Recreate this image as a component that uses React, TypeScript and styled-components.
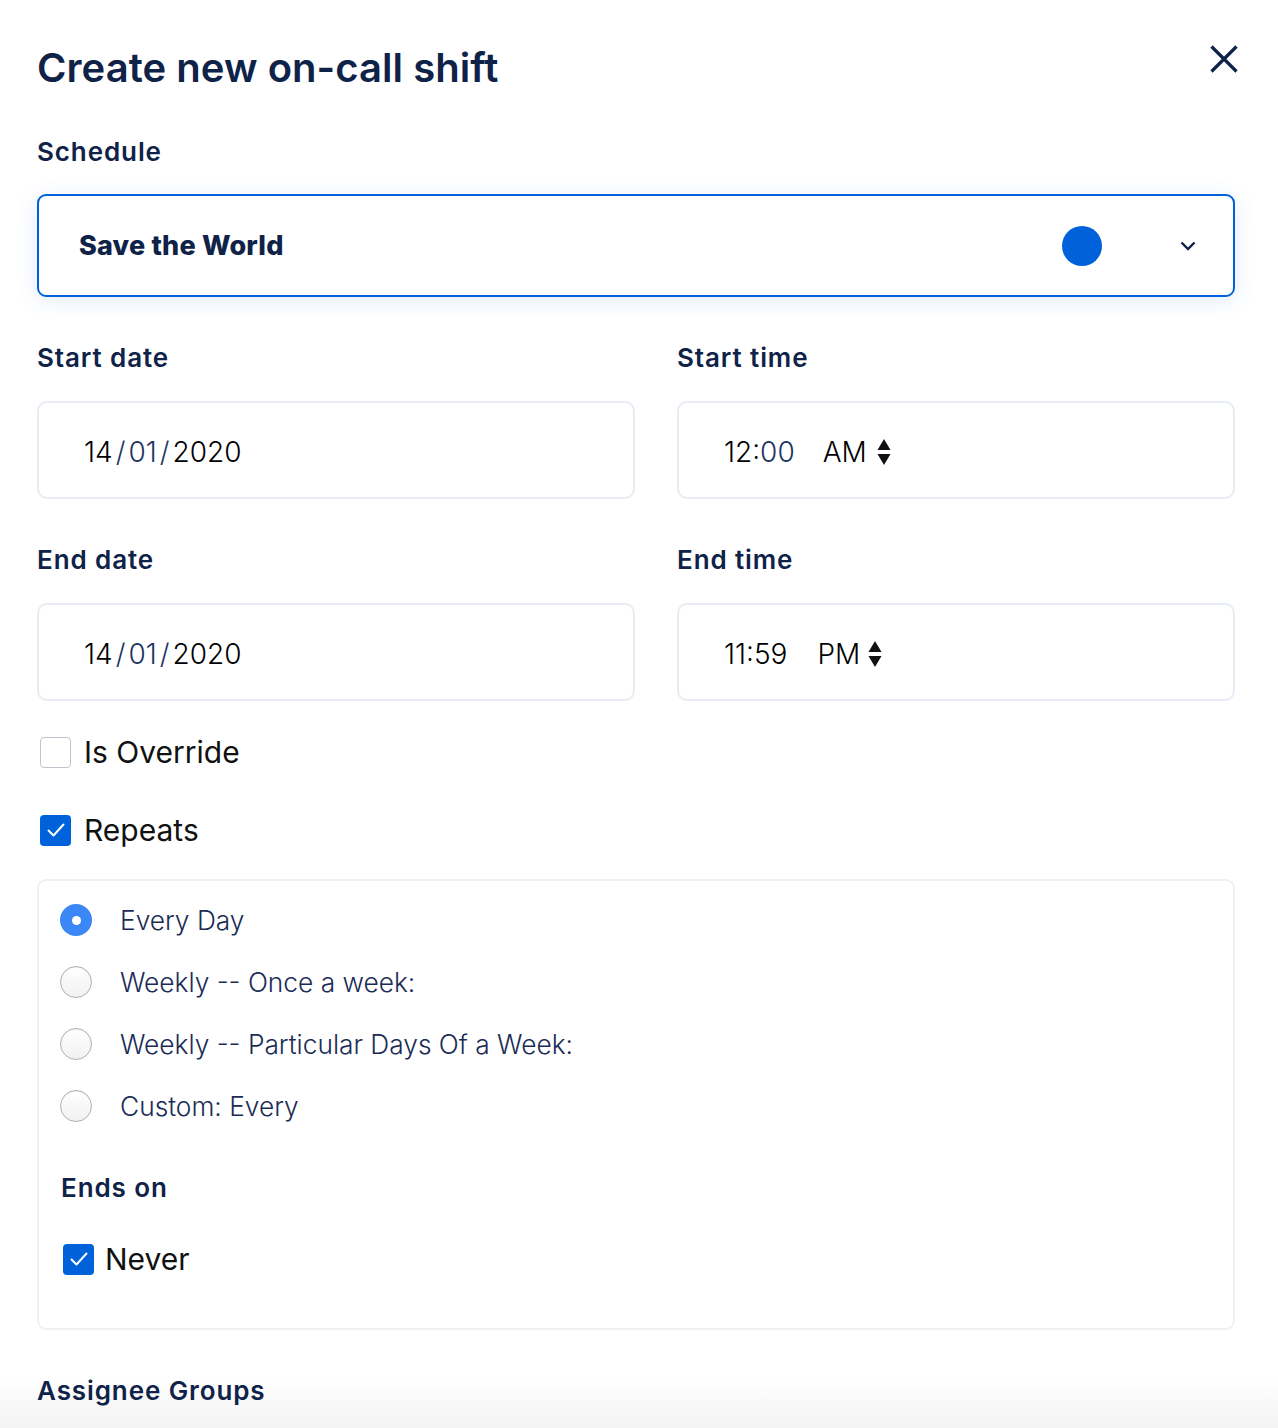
import React from "react";
import styled, { createGlobalStyle } from "styled-components";

const Global = createGlobalStyle`
  html, body { margin: 0; padding: 0; background: #ffffff; }
  body { font-family: Inter, Roboto, "Noto Sans", Arial, sans-serif; }
  * { box-sizing: border-box; }
`;

const navy = "#0f2248";

const Page = styled.div`
  width: 1278px;
  height: 1428px;
  overflow: hidden;
  padding: 44px 43px 0 37px;
  background: linear-gradient(to bottom, #ffffff 0, #ffffff 1376px, #f3f3f3 1428px);
`;

const Header = styled.div`
  display: flex;
  justify-content: space-between;
  align-items: flex-start;
`;

const Title = styled.h1`
  margin: 0;
  font-size: 40px;
  line-height: 48px;
  font-weight: 600;
  color: ${navy};
  letter-spacing: 0.05px;
`;

const CloseButton = styled.button`
  width: 28px;
  height: 28px;
  margin: 1px -3px 0 0;
  padding: 0;
  border: none;
  background: none;
  display: flex;
`;

const Label = styled.div<{ $mt?: number }>`
  margin-top: ${(p) => p.$mt ?? 0}px;
  font-size: 26px;
  line-height: 32px;
  font-weight: 600;
  letter-spacing: 0.9px;
  color: ${navy};
`;

const SelectBox = styled.div`
  margin-top: 26px;
  height: 103px;
  border: 2px solid #0062da;
  border-radius: 9px;
  box-shadow: 0 4px 22px rgba(0, 98, 218, 0.12);
  display: flex;
  align-items: center;
  padding: 0 37px 0 40px;
`;

const SelectText = styled.div`
  flex: 1;
  font-size: 27px;
  font-weight: 800;
  letter-spacing: 0.2px;
  color: ${navy};
`;

const Dot = styled.div`
  width: 40px;
  height: 40px;
  border-radius: 50%;
  background: #0062da;
  margin-right: 78px;
`;

const Grid = styled.div`
  display: grid;
  grid-template-columns: 1fr 1fr;
  margin-top: 45px;
  row-gap: 45px;
`;

const Field = styled.div<{ $right?: boolean }>`
  padding-left: ${(p) => (p.$right ? 41 : 0)}px;
  padding-right: ${(p) => (p.$right ? 0 : 1)}px;
`;

const InputBox = styled.div`
  margin-top: 27px;
  height: 98px;
  border: 2px solid #e6ebf4;
  border-radius: 10px;
  display: flex;
  align-items: center;
  padding: 3px 0 0 45px;
  font-size: 28px;
  font-weight: 300;
  color: #000;
`;

const Seg = styled.span<{ $focus?: boolean; $ml?: number }>`
  color: ${(p) => (p.$focus ? "#1d3563" : "#000")};
  margin-left: ${(p) => p.$ml ?? 0}px;
`;

const Slash = styled.span`
  color: #1d3563;
  margin: 0 3px;
`;

const SpinnerIcon = styled.svg<{ $ml: number }>`
  margin-left: ${(p) => p.$ml}px;
  flex: none;
`;

const CheckRow = styled.label<{ $mt: number; $gap?: number }>`
  display: flex;
  align-items: center;
  margin-top: ${(p) => p.$mt}px;
  padding-left: 3px;
  gap: ${(p) => p.$gap ?? 13}px;
  height: 32px;
  font-size: 30px;
  font-weight: 400;
  color: #111;
`;

const Box = styled.span<{ $checked?: boolean }>`
  width: 31px;
  height: 31px;
  border-radius: 4px;
  flex: none;
  display: flex;
  align-items: center;
  justify-content: center;
  background: ${(p) => (p.$checked ? "#0062da" : "#fff")};
  border: ${(p) => (p.$checked ? "none" : "1.5px solid #bfc5cf")};
`;

const RepeatPanel = styled.div`
  margin-top: 33px;
  border: 2px solid #f0f1f3;
  border-radius: 9px;
  padding: 8px 20px 53px 21px;
`;

const RadioRow = styled.div`
  display: flex;
  align-items: center;
  height: 62px;
  gap: 28px;
  font-size: 26.3px;
  font-weight: 300;
  color: #1a2c55;
`;

const Radio = styled.span<{ $on?: boolean }>`
  width: 32px;
  height: 32px;
  border-radius: 50%;
  flex: none;
  display: flex;
  align-items: center;
  justify-content: center;
  background: ${(p) => (p.$on ? "#3a87f5" : "linear-gradient(#ffffff, #f1f1f1)")};
  border: ${(p) => (p.$on ? "none" : "1.5px solid #b0b0b0")};
  box-shadow: ${(p) => (p.$on ? "none" : "inset 0 1px 1px rgba(0,0,0,0.06)")};
  &::after {
    content: "";
    display: ${(p) => (p.$on ? "block" : "none")};
    width: 9px;
    height: 9px;
    border-radius: 50%;
    background: #fff;
  }
`;

const SubLabel = styled(Label)`
  margin-top: 35px;
  padding-left: 1px;
`;

const Check = () => (
  <svg width="20" height="16" viewBox="0 0 20 16" fill="none">
    <path d="M2.5 8.5 L7.5 13.5 L17.5 2.5" stroke="#fff" strokeWidth="2" strokeLinecap="round" strokeLinejoin="round" />
  </svg>
);

const Spinner = ({ ml }: { ml: number }) => (
  <SpinnerIcon $ml={ml} width="14" height="26" viewBox="0 0 14 26">
    <path d="M7 0 L13.5 11 L0.5 11 Z" fill="#111" />
    <path d="M7 26 L13.5 15 L0.5 15 Z" fill="#111" />
  </SpinnerIcon>
);

const DateValue = () => (
  <>
    <Seg>14</Seg>
    <Slash>/</Slash>
    <Seg $focus>01</Seg>
    <Slash>/</Slash>
    <Seg>2020</Seg>
  </>
);

export default function App() {
  return (
    <>
      <Global />
      <Page>
        <Header>
          <Title>Create new on-call shift</Title>
          <CloseButton aria-label="Close">
            <svg width="28" height="28" viewBox="0 0 28 28">
              <path d="M1.5 1.5 L26.5 26.5 M26.5 1.5 L1.5 26.5" stroke={navy} strokeWidth="3.2" />
            </svg>
          </CloseButton>
        </Header>

        <Label $mt={44}>Schedule</Label>
        <SelectBox>
          <SelectText>Save the World</SelectText>
          <Dot />
          <svg width="16" height="10" viewBox="0 0 16 10">
            <path d="M1.5 1.5 L8 8 L14.5 1.5" stroke={navy} strokeWidth="2.4" fill="none" />
          </svg>
        </SelectBox>

        <Grid>
          <Field>
            <Label>Start date</Label>
            <InputBox>
              <DateValue />
            </InputBox>
          </Field>
          <Field $right>
            <Label>Start time</Label>
            <InputBox>
              <Seg>12:</Seg>
              <Seg $focus>00</Seg>
              <Seg $ml={28}>AM</Seg>
              <Spinner ml={10} />
            </InputBox>
          </Field>
          <Field>
            <Label>End date</Label>
            <InputBox>
              <DateValue />
            </InputBox>
          </Field>
          <Field $right>
            <Label>End time</Label>
            <InputBox>
              <Seg>11:59</Seg>
              <Seg $ml={30}>PM</Seg>
              <Spinner ml={8} />
            </InputBox>
          </Field>
        </Grid>

        <CheckRow $mt={35}>
          <Box />
          Is Override
        </CheckRow>
        <CheckRow $mt={46}>
          <Box $checked>
            <Check />
          </Box>
          Repeats
        </CheckRow>

        <RepeatPanel>
          <RadioRow>
            <Radio $on />
            Every Day
          </RadioRow>
          <RadioRow>
            <Radio />
            Weekly -- Once a week:
          </RadioRow>
          <RadioRow>
            <Radio />
            Weekly -- Particular Days Of a Week:
          </RadioRow>
          <RadioRow>
            <Radio />
            Custom: Every
          </RadioRow>
          <SubLabel>Ends on</SubLabel>
          <CheckRow $mt={39} $gap={11}>
            <Box $checked>
              <Check />
            </Box>
            Never
          </CheckRow>
        </RepeatPanel>

        <Label $mt={45}>Assignee Groups</Label>
      </Page>
    </>
  );
}
